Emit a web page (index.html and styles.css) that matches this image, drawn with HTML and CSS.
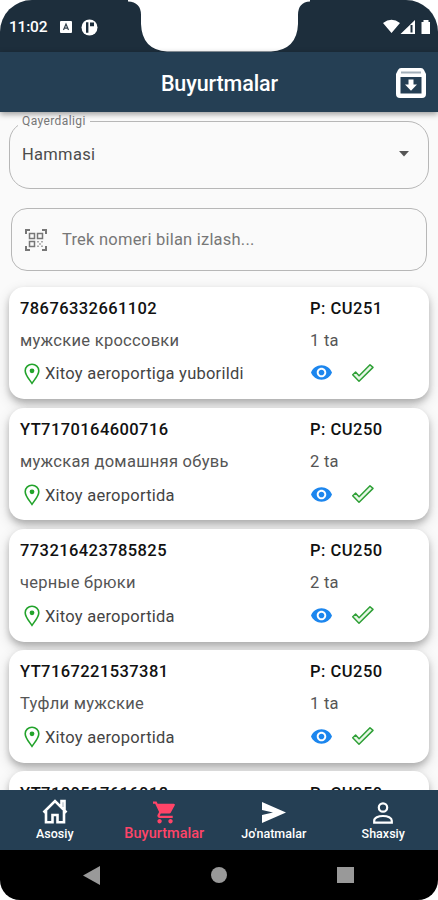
FILE: index.html
```html
<!DOCTYPE html>
<html lang="uz">
<head>
<meta charset="utf-8">
<meta name="viewport" content="width=device-width">
<title>Buyurtmalar</title>
<link rel="stylesheet" href="styles.css">
</head>
<body>
<svg width="0" height="0" class="defs">
  <symbol id="pin" viewBox="0 0 16 22"><path d="M8 1.200C4.200 1.200 1.200 4 1.200 7.700c0 4.500 4.600 9.300 6.800 12.600 2.200-3.300 6.800-8.100 6.800-12.600C14.800 4 11.800 1.200 8 1.200Z" fill="none" stroke="#22a32b" stroke-width="1.600"/><circle cx="8" cy="7.800" r="2.400" fill="#22a32b"/></symbol>
  <symbol id="eye" viewBox="1 4.500 22 15"><path fill="#1c86ee" d="M12 4.500C7 4.500 2.730 7.610 1 12c1.730 4.390 6 7.500 11 7.500s9.270-3.110 11-7.500c-1.730-4.390-6-7.500-11-7.500zM12 17c-2.760 0-5-2.240-5-5s2.240-5 5-5 5 2.240 5 5-2.240 5-5 5zm0-8c-1.660 0-3 1.340-3 3s1.340 3 3 3 3-1.340 3-3-1.340-3-3-3z"/></symbol>
  <symbol id="check" viewBox="0 0 24 20"><path d="M1.700 11.700 4.600 9l3.500 3.700L19 1.700l3 2.700L8 18.300Z" fill="#e9f7e8" stroke="#2fa037" stroke-width="1.500" stroke-linejoin="round"/></symbol>
</svg>
<div class="phone">
  <header class="status">
    <span class="time">11:02</span>
    <svg class="badge" width="12" height="12" viewBox="0 0 12 12"><rect width="12" height="12" rx="1" fill="#fff"/><path d="M3.500 9 6 3l2.500 6M4.400 7.200h3.200" fill="none" stroke="#34434e" stroke-width="1.200"/></svg>
    <svg class="round" width="17" height="17" viewBox="0 0 17 17"><circle cx="8.500" cy="8.500" r="8" fill="#fff"/><path d="M6.200 3.300v10.400" fill="none" stroke="#1c2d3b" stroke-width="2.400"/><path d="M9 3.500h4v3.700H9z" fill="#1c2d3b"/></svg>
    <svg class="signals" width="49" height="16" viewBox="0 0 49 16"><path fill="#fff" d="M0 4Q8.500-2.600 17 4L8.500 14ZM17.500 15 32 1v14ZM38.500 3h2V1h5v2h1.500v12h-8.500Z"/><path d="M28.500 6v7.500" stroke="#1d2e3c" stroke-width="2"/></svg>
    <svg class="notch" width="182" height="52" viewBox="0 0 182 52"><path fill="#fff" d="M0 0v1.500Q13 2 13 15v9Q14 50 39 51.500h104Q169 50 170 24v-9Q170 2 182 1.500V0Z"/></svg>
  </header>
  <div class="appbar">
    <h1>Buyurtmalar</h1>
    <svg class="archive" width="30" height="30" viewBox="0 0 30 30"><path fill="#fff" fill-rule="evenodd" d="M5 0h20q2 0 3 2l2 4v20q0 4-4 4H4q-4 0-4-4V6l2-4q1-2 3-2ZM4.500 9v16.500h21V9Z"/><path d="M5 4.500h20" stroke="#a3b0ba" stroke-width="2.200"/><path fill="#fff" d="M12.500 11.500h5v5H21l-6 6.300-6-6.300h3.500Z"/></svg>
  </div>
  <main>
    <fieldset class="select"><legend>Qayerdaligi</legend>
      <div class="value"><span>Hammasi</span><svg width="10" height="6" viewBox="0 0 10 6"><path d="M0 0h10L5 5.500Z" fill="#555"/></svg></div>
    </fieldset>
    <div class="search">
      <svg width="22" height="22" viewBox="0 0 22 22" fill="none" stroke="#777" stroke-width="1.500"><path stroke-width="2" d="M1 5V1h4M17 1h4v4M1 17v4h4M17 21h4v-4"/><path d="M4.500 4.500h5v5h-5zM12.500 4.500h5v5h-5zM4.500 12.500h5v5h-5z"/><path d="M12 12.800h2M16 12.800h2M14 15h2M12 17.300h2M16 17.300h2" stroke="#aaa"/></svg>
      <span>Trek nomeri bilan izlash...</span>
    </div>
    <section class="list">
      <article><div class="info"><b>78676332661102</b><p>мужские кроссовки</p><div class="place"><svg width="16" height="22"><use href="#pin"/></svg><span>Xitoy aeroportiga yuborildi</span></div></div><div class="side"><b>P: CU251</b><p>1 ta</p><div class="acts"><svg width="21" height="15"><use href="#eye"/></svg><svg width="24" height="20"><use href="#check"/></svg></div></div></article>
      <article><div class="info"><b>YT7170164600716</b><p>мужская домашняя обувь</p><div class="place"><svg width="16" height="22"><use href="#pin"/></svg><span>Xitoy aeroportida</span></div></div><div class="side"><b>P: CU250</b><p>2 ta</p><div class="acts"><svg width="21" height="15"><use href="#eye"/></svg><svg width="24" height="20"><use href="#check"/></svg></div></div></article>
      <article><div class="info"><b>773216423785825</b><p>черные брюки</p><div class="place"><svg width="16" height="22"><use href="#pin"/></svg><span>Xitoy aeroportida</span></div></div><div class="side"><b>P: CU250</b><p>2 ta</p><div class="acts"><svg width="21" height="15"><use href="#eye"/></svg><svg width="24" height="20"><use href="#check"/></svg></div></div></article>
      <article><div class="info"><b>YT7167221537381</b><p>Туфли мужские</p><div class="place"><svg width="16" height="22"><use href="#pin"/></svg><span>Xitoy aeroportida</span></div></div><div class="side"><b>P: CU250</b><p>1 ta</p><div class="acts"><svg width="21" height="15"><use href="#eye"/></svg><svg width="24" height="20"><use href="#check"/></svg></div></div></article>
      <article><div class="info"><b>YT7180517616018</b></div><div class="side"><b>P: CU250</b></div></article>
    </section>
  </main>
  <nav class="tabs">
    <a><svg width="26" height="25" viewBox="0 0 26 25" fill="none" stroke="#fff" stroke-width="2.600"><path d="M1.500 13.500 13 2l11.500 11.500M19.500 8V2h3v9M4 12v11.300h6.500V16h5v7.300H22V12"/></svg><span>Asosiy</span></a>
    <a class="active"><svg width="23" height="23" viewBox="1 2 21 20"><path fill="#ff4468" d="M7 18c-1.100 0-1.990.9-1.990 2S5.900 22 7 22s2-.9 2-2-.9-2-2-2zM1 2v2h2l3.600 7.590-1.350 2.450c-.16.28-.25.610-.25.960 0 1.100.9 2 2 2h12v-2H7.420c-.14 0-.25-.11-.25-.25l.030-.12.900-1.630h7.450c.750 0 1.410-.41 1.750-1.030l3.580-6.490A1 1 0 0 0 20 4H5.210l-.94-2H1zm16 16c-1.100 0-1.990.9-1.990 2s.89 2 1.990 2 2-.9 2-2-.9-2-2-2z"/></svg><span>Buyurtmalar</span></a>
    <a><svg class="send" width="24" height="21" viewBox="0 0 24 21"><path fill="#fff" d="M0 0 24 10.500 0 21v-8l11-2.500L0 8Z"/></svg><span>Jo'natmalar</span></a>
    <a><svg width="20" height="22" viewBox="0 0 20 22" fill="none" stroke="#fff" stroke-width="2.200"><circle cx="10" cy="5.500" r="4.200"/><path d="M1.200 20.700v-2c0-2.800 4-4.700 8.800-4.700s8.800 1.900 8.800 4.700v2Z"/></svg><span>Shaxsiy</span></a>
  </nav>
  <footer class="system">
    <svg width="17" height="19" viewBox="0 0 17 19"><path fill="#999" d="M17 0v19L0 9.500Z"/></svg>
    <i class="home"></i><i class="recent"></i>
  </footer>
</div>
</body>
</html>
```
FILE: styles.css
```css
* { box-sizing: border-box; }
body { margin: 0; background: #fff; font-family: Roboto, sans-serif; }
.defs { position: absolute; }
.phone { width: 438px; height: 900px; overflow: hidden; display: flex; flex-direction: column; border-radius: 32px 32px 20px 20px; background: #fafafa; }
.status { position: relative; flex: 0 0 52px; display: flex; align-items: center; padding: 2px 6px 0 9px; background: #1d2e3c; color: #fff; }
.time { width: 39px; font-size: 15.5px; font-weight: 500; letter-spacing: -.2px; }
.badge { margin-left: 12px; }
.round { margin-left: 9px; }
.signals { margin-left: auto; }
.notch { position: absolute; left: 128px; top: 0; }
.appbar { position: relative; z-index: 1; flex: 0 0 60px; display: grid; grid-template-columns: 1fr auto 1fr; align-items: center; padding: 2px 12px 0 13px; background: #253f54; color: #fff; box-shadow: 0 2px 6px rgba(0,0,0,.4); }
h1 { grid-column: 2; margin: 0; font-size: 21.5px; font-weight: 500; letter-spacing: -.1px; }
.archive { justify-self: end; }
main { flex: 1; min-height: 0; overflow: hidden; padding: 2px 9px 0; }
.select { height: 75px; margin: 0; padding: 0 19px 0 12px; border: 1px solid #b7b7b7; border-radius: 21px; }
legend { margin-left: -4px; padding: 0 4px; font-size: 12px; line-height: 14px; color: #777; letter-spacing: .4px; }
.value { display: flex; align-items: center; justify-content: space-between; height: 52px; color: #4c4c4c; font-size: 16.5px; letter-spacing: .3px; }
.search { display: flex; align-items: center; gap: 15px; height: 63px; margin: 19px 2px 15.5px; padding-left: 13px; border: 1px solid #b7b7b7; border-radius: 16px; color: #777; font-size: 16.5px; letter-spacing: .22px; }
.list { display: flex; flex-direction: column; gap: 8.5px; }
article { flex: 0 0 112.7px; display: flex; padding: 12.4px 11px 11px; border-radius: 15px; background: #fff; box-shadow: 0 4px 6px rgba(0,0,0,.2), 0 5px 14px rgba(0,0,0,.16); font-size: 16.5px; }
.info { width: 290px; }
article b { display: block; line-height: 20px; font-weight: 500; letter-spacing: .42px; color: #111; white-space: nowrap; }
article p { margin: 12px 0 0; line-height: 20px; color: #555; letter-spacing: .28px; white-space: nowrap; }
.side b { letter-spacing: .5px; }
.place { display: flex; align-items: center; gap: 5px; height: 22px; margin: 12px 0 0 4px; color: #444; letter-spacing: .24px; }
.acts { display: flex; align-items: center; gap: 19px; height: 22px; margin: 11px 0 0 1px; }
.tabs { position: relative; flex: 0 0 60px; display: grid; grid-template-columns: repeat(4, 1fr); background: #253f54; color: #fff; }
.tabs a { display: flex; flex-direction: column; align-items: center; justify-content: flex-end; padding-bottom: 8px; font-size: 12.5px; font-weight: 500; line-height: 16px; }
.tabs svg { margin-bottom: 2px; }
.tabs .send { margin-bottom: 3px; }
.tabs .active { color: #ff4468; font-size: 14.5px; }
.system { flex: 0 0 50px; display: flex; align-items: center; justify-content: space-between; padding: 0 84px 0 83px; background: #000; }
.home { width: 16px; height: 16px; border-radius: 50%; background: #999; }
.recent { width: 17px; height: 16px; background: #999; }
```
